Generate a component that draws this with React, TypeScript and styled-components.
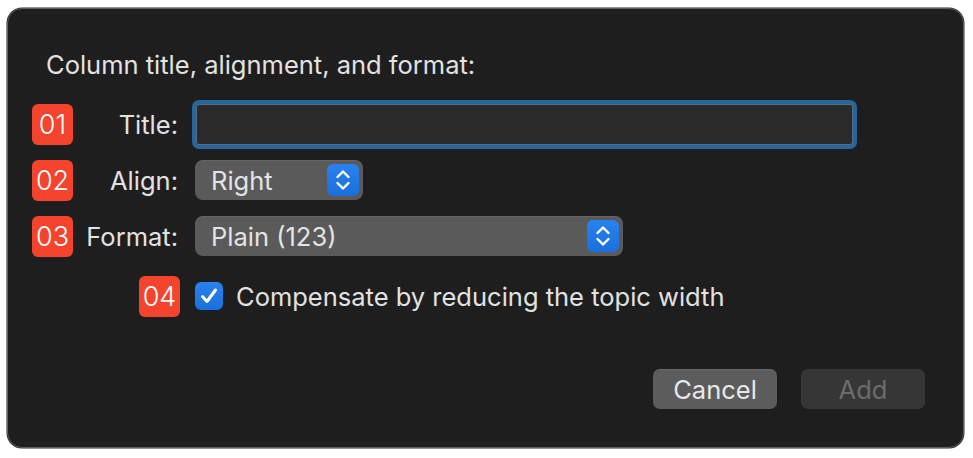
import React from "react";
import styled, { createGlobalStyle } from "styled-components";

const Global = createGlobalStyle`
  html, body { margin: 0; padding: 0; background: #ffffff; }
  body { font-family: Inter, "Helvetica Neue", Arial, sans-serif; -webkit-font-smoothing: antialiased; }
  * { box-sizing: border-box; }
`;

const Page = styled.div`
  padding: 8px 9px 10px 7px;
  width: 973px;
  height: 458px;
`;

const Dialog = styled.div`
  width: 957px;
  height: 440px;
  background: #1e1e1e;
  border: 1px solid #5f5f5f;
  border-radius: 15px;
  box-shadow: 0 0 0 0.5px #2a2a2a;
  display: flex;
  flex-direction: column;
  padding: 41px 38px 38px 24px;
  color: #e2e2e2;
`;

const Heading = styled.div`
  font-size: 25.5px;
  line-height: 30px;
  margin-left: 14px;
`;

const Form = styled.div`
  display: flex;
  flex-direction: column;
  gap: 14px;
  margin-top: 23px;
`;

const Row = styled.div<{ $extra?: number }>`
  display: grid;
  grid-template-columns: 146px 1fr;
  column-gap: 17px;
  align-items: center;
  height: 42px;
  margin-top: ${(p) => p.$extra ?? 0}px;
`;

const LabelCell = styled.div<{ $end?: boolean }>`
  display: flex;
  align-items: center;
  justify-content: ${(p) => (p.$end ? "flex-end" : "space-between")};
  margin-right: ${(p) => (p.$end ? "-2px" : "0")};
`;

const Badge = styled.div`
  width: 41px;
  height: 41px;
  border-radius: 6px;
  background: #f4442e;
  color: #ffffff;
  font-size: 27px;
  font-weight: 300;
  display: flex;
  align-items: center;
  justify-content: center;
`;

const Label = styled.span`
  font-size: 25.5px;
  color: #e2e2e2;
`;

const TextField = styled.div`
  width: 657px;
  height: 41px;
  margin-left: 1px;
  background: #2a2a2a;
  border: 1px solid #4f6f8b;
  border-radius: 3px;
  box-shadow: 0 0 0 4px #28669a;
`;

const Popup = styled.div<{ $w: number }>`
  width: ${(p) => p.$w}px;
  height: 40px;
  background: #5a5a5a;
  border-radius: 8px;
  display: flex;
  align-items: center;
  justify-content: space-between;
  padding: 0 4px 0 16px;
  font-size: 25.5px;
  color: #e4e4e4;
  box-shadow: inset 0 1px 0 rgba(255, 255, 255, 0.08);
`;

const Stepper = styled.div`
  width: 32px;
  height: 32px;
  border-radius: 6px;
  background: linear-gradient(#2a82ee, #1a6fdd);
  display: flex;
  align-items: center;
  justify-content: center;
`;

const CheckRow = styled.label`
  display: flex;
  align-items: center;
  gap: 13px;
  font-size: 25.5px;
  color: #e2e2e2;
`;

const CheckBox = styled.span`
  width: 28px;
  height: 28px;
  border-radius: 6px;
  background: linear-gradient(#2a82ee, #1a6fdd);
  display: flex;
  align-items: center;
  justify-content: center;
`;

const Footer = styled.div`
  margin-top: auto;
  display: flex;
  justify-content: flex-end;
  gap: 24px;
`;

const Button = styled.button<{ $disabled?: boolean }>`
  width: 124px;
  height: 40px;
  border: none;
  border-radius: 7px;
  font-family: inherit;
  font-size: 25.5px;
  background: ${(p) => (p.$disabled ? "#363636" : "#5c5c5c")};
  color: ${(p) => (p.$disabled ? "#6c6c6c" : "#e8e8e8")};
  box-shadow: ${(p) => (p.$disabled ? "none" : "inset 0 1px 0 rgba(255,255,255,0.08)")};
`;

const StepperIcon = () => (
  <svg width="32" height="32" viewBox="0 0 32 32" fill="none">
    <path d="M10.5 13 L16 7.5 L21.5 13" stroke="#fff" strokeWidth="2.4" strokeLinecap="round" strokeLinejoin="round" />
    <path d="M10.5 19 L16 24.5 L21.5 19" stroke="#fff" strokeWidth="2.4" strokeLinecap="round" strokeLinejoin="round" />
  </svg>
);

const CheckIcon = () => (
  <svg width="28" height="28" viewBox="0 0 28 28" fill="none">
    <path d="M7.5 14.5 L12 19.5 L20.5 8" stroke="#fff" strokeWidth="3" strokeLinecap="round" strokeLinejoin="round" />
  </svg>
);

export default function App() {
  return (
    <>
      <Global />
      <Page>
        <Dialog>
          <Heading>Column title, alignment, and format:</Heading>
          <Form>
            <Row>
              <LabelCell>
                <Badge>01</Badge>
                <Label>Title:</Label>
              </LabelCell>
              <TextField />
            </Row>
            <Row>
              <LabelCell>
                <Badge>02</Badge>
                <Label>Align:</Label>
              </LabelCell>
              <Popup $w={168}>
                <span>Right</span>
                <Stepper>
                  <StepperIcon />
                </Stepper>
              </Popup>
            </Row>
            <Row>
              <LabelCell>
                <Badge>03</Badge>
                <Label>Format:</Label>
              </LabelCell>
              <Popup $w={428}>
                <span>Plain (123)</span>
                <Stepper>
                  <StepperIcon />
                </Stepper>
              </Popup>
            </Row>
            <Row $extra={4}>
              <LabelCell $end>
                <Badge>04</Badge>
              </LabelCell>
              <CheckRow>
                <CheckBox>
                  <CheckIcon />
                </CheckBox>
                Compensate by reducing the topic width
              </CheckRow>
            </Row>
          </Form>
          <Footer>
            <Button>Cancel</Button>
            <Button $disabled>Add</Button>
          </Footer>
        </Dialog>
      </Page>
    </>
  );
}
